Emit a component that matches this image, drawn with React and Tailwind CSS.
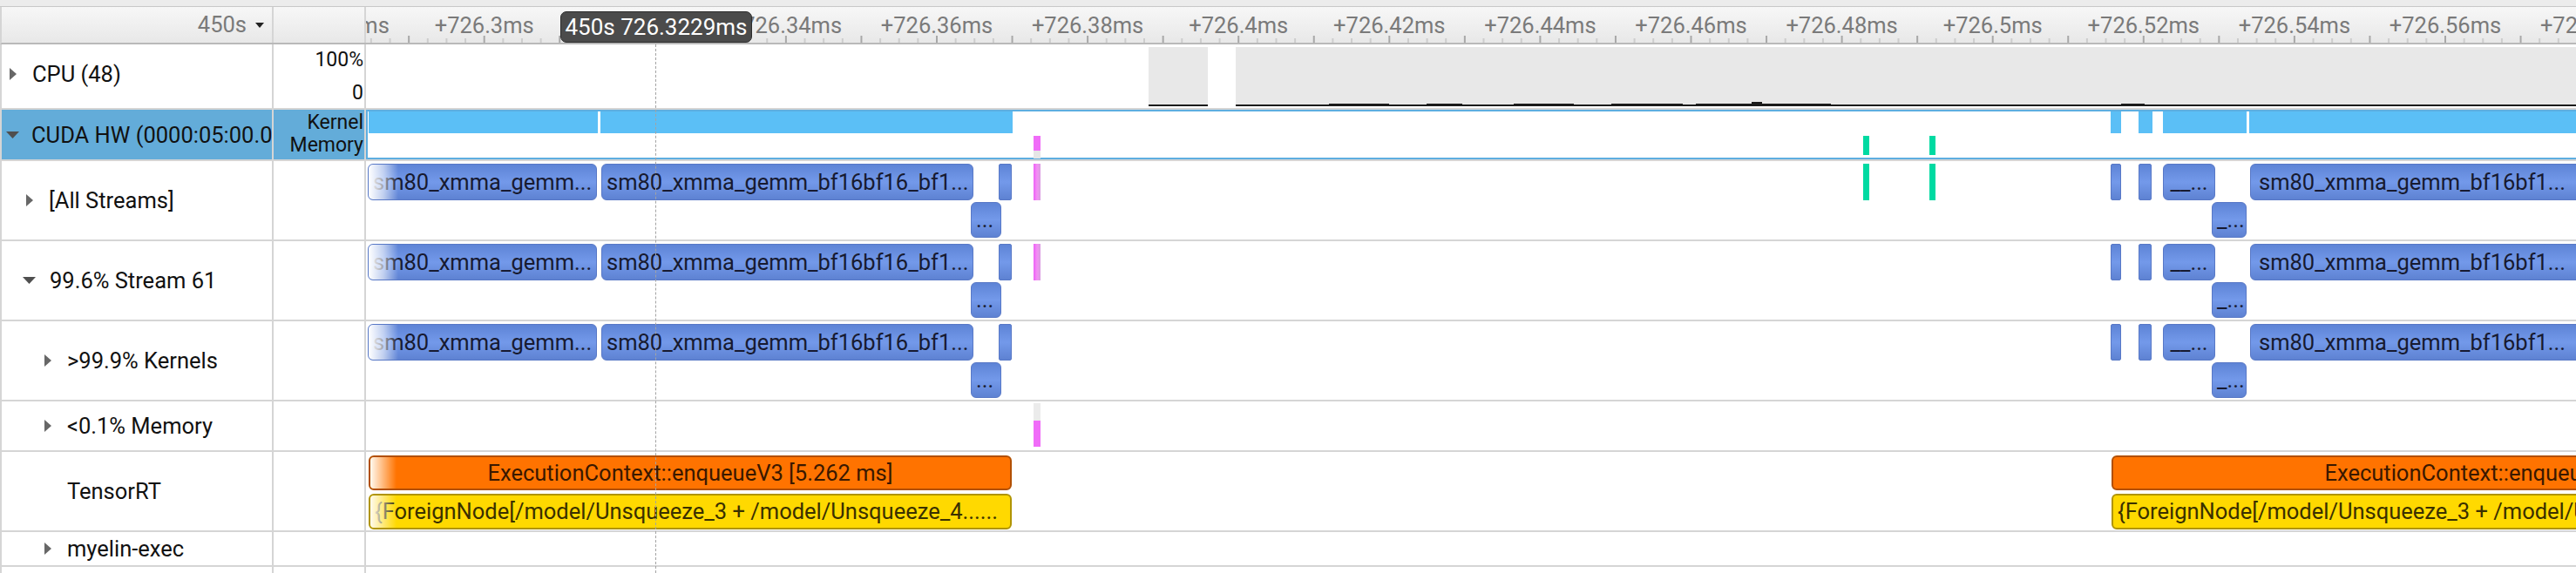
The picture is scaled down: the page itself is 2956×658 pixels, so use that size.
import clsx from "clsx";

// timeline canvas starts here (page x)
const TL = 420;
const pos = (x, w) => ({ left: x - TL, width: w });

const T0 = 555.7; // centre of +726.3ms
const STEP = 173.1; // px per 0.02ms

const ticks = [];
for (let i = -10; i < 130; i++) {
  const x = T0 + i * (STEP / 8);
  if (x < TL || x > 2960) continue;
  ticks.push({ x: x - TL, major: i % 4 === 0 });
}

// k = 1 (+726.32ms) sits under the cursor tooltip, so it is left out
const labels = [];
for (let k = -1; k <= 14; k++) {
  if (k === 1) continue;
  labels.push({
    x: T0 + STEP * k - TL,
    text: "+" + parseFloat((726.3 + 0.02 * k).toFixed(2)) + "ms",
  });
}

const kernelTop = [
  { x: 422, w: 263, t: "sm80_xmma_gemm...", fade: true },
  { x: 690, w: 427, t: "sm80_xmma_gemm_bf16bf16_bf1..." },
  { x: 1146, w: 15 },
  { x: 2422, w: 12 },
  { x: 2454, w: 15 },
  { x: 2482, w: 60, t: "__...", center: true },
  { x: 2582, w: 420, t: "sm80_xmma_gemm_bf16bf1...", wide: true },
];

const kernelLow = [
  { x: 1114, w: 35, t: "..." },
  { x: 2538, w: 40, t: "_..." },
];

const cpuBumps = [
  [1525, 69],
  [1637, 41],
  [1737, 69],
  [1849, 82],
  [1946, 155],
  [2434, 27],
];

function Tri({ dir }) {
  if (dir === "right") {
    return (
      <svg width="8" height="14" viewBox="0 0 8 14" className="shrink-0">
        <path d="M0 0 L8 7 L0 14 Z" fill="#676767" />
      </svg>
    );
  }
  return (
    <svg width="15" height="8" viewBox="0 0 15 8" className="shrink-0">
      <path d="M0 0 L15 0 L7.5 8 Z" fill="#4f4f4f" />
    </svg>
  );
}

function Label({ tri, text, className }) {
  return (
    <div className={clsx("flex h-full items-center whitespace-nowrap text-[25.5px] leading-[30px]", className)}>
      {tri && <Tri dir={tri} />}
      <span>{text}</span>
    </div>
  );
}

function Row({ className, sel, label, meta, children }) {
  return (
    <div className={clsx("flex border-b-2 border-l-2 border-[#d5d5d5]", className)}>
      <div className={clsx("w-[312px] shrink-0 overflow-hidden border-r-2 border-[#d5d5d5]", sel && "bg-[#63acd9]")}>
        {label}
      </div>
      <div className={clsx("w-[106px] shrink-0 border-r-2 border-[#d5d5d5]", sel && "bg-[#63acd9]")}>{meta}</div>
      <div className="relative flex-1 overflow-hidden">{children}</div>
    </div>
  );
}

function Kernel({ b, low }) {
  return (
    <div
      className={clsx(
        "absolute flex items-center overflow-hidden whitespace-nowrap border border-[#5878c6] bg-linear-to-b from-[#5e84d6] via-[#7399ea] to-[#5e82d2] text-[25.5px] text-[#171a30]",
        low ? "top-[47px] h-[41px]" : "top-[3px] h-[42px]",
        b.t ? "rounded-[6px]" : "rounded-[2px]",
        b.center ? "justify-center" : b.wide ? "pl-[9px]" : "pl-[5px]"
      )}
      style={pos(b.x, b.w)}
    >
      {b.t}
      {b.fade && <div className="absolute inset-y-0 left-0 w-[34px] bg-linear-to-r from-white via-white/60 to-transparent" />}
    </div>
  );
}

function KernelLane({ extra }) {
  return (
    <>
      {kernelTop.map((b) => (
        <Kernel key={b.x} b={b} />
      ))}
      {kernelLow.map((b) => (
        <Kernel key={b.x} b={b} low />
      ))}
      {extra}
    </>
  );
}

function Pink({ className }) {
  return (
    <div
      className={clsx("absolute bg-linear-to-r from-[#ec5ef6] via-[#f38ff4] to-[#d89ee0]", className)}
      style={pos(1186, 8)}
    />
  );
}

function Teal({ className }) {
  return (
    <>
      <div className={clsx("absolute bg-[#00daa2]", className)} style={pos(2138, 7)} />
      <div className={clsx("absolute bg-[#00daa2]", className)} style={pos(2214, 7)} />
    </>
  );
}

function Slice({ x, w, orange, text, fade }) {
  return (
    <div
      className={clsx(
        "absolute flex items-center overflow-hidden whitespace-nowrap rounded-[6px] border-2 text-[25.5px]",
        orange
          ? "top-[4px] h-[40px] justify-center border-[#b14f00] bg-[#ff7300] text-[#3a1800]"
          : "top-[48px] h-[41px] border-[#b09400] bg-[#ffd900] pl-[5px] text-[#3a3000]"
      )}
      style={pos(x, w)}
    >
      {text}
      {fade && <div className="absolute inset-y-0 left-0 w-[30px] bg-linear-to-r from-[#fffaf0] to-transparent" />}
    </div>
  );
}

export default function App() {
  return (
    <div className="relative h-[658px] w-[2956px] overflow-hidden bg-white font-['Roboto'] text-[#111]">
      <div className="h-[8px] border-b border-[#c8c8c8] bg-[#ececec]" />

      {/* header */}
      <div className="flex h-[43px] border-b-2 border-l-2 border-[#b9b9b9] border-l-[#d5d5d5] bg-linear-to-b from-[#f7f7f7] to-[#e8e8e8]">
        <div className="flex w-[312px] shrink-0 items-center justify-end gap-[10px] border-r-2 border-[#d5d5d5] pr-[9px] text-[25.5px] text-[#7a7a7a]">
          <span>450s</span>
          <svg width="10" height="6" viewBox="0 0 10 6">
            <path d="M0 0 L10 0 L5 6 Z" fill="#222" />
          </svg>
        </div>
        <div className="w-[106px] shrink-0 border-r-2 border-[#d5d5d5]" />
        <div className="relative flex-1 overflow-hidden">
          {labels.map((l) => (
            <span
              key={l.text}
              className="absolute top-[8px] -translate-x-1/2 whitespace-nowrap text-[25.5px] leading-[26px] text-[#7a7a7a]"
              style={{ left: l.x }}
            >
              {l.text}
            </span>
          ))}
          <svg className="absolute bottom-0 left-0" width="2536" height="8">
            {ticks.map((t) => (
              <rect
                key={t.x}
                x={t.x - 1}
                y={t.major ? 0 : 3}
                width="2"
                height={t.major ? 8 : 5}
                fill={t.major ? "#a8a8a8" : "#cdcdcd"}
              />
            ))}
          </svg>
        </div>
      </div>

      {/* CPU */}
      <Row
        className="h-[75px]"
        label={<Label tri="right" text="CPU (48)" className="gap-[18px] pb-[6px] pl-[9px]" />}
        meta={
          <div className="flex flex-col items-end pr-[1px] pt-[6px] text-[23px] leading-[24px]">
            <span>100%</span>
            <span className="mt-[14px]">0</span>
          </div>
        }
      >
        <div className="absolute top-[3px] h-[68px] border-b-2 border-[#1b1b1b] bg-[#e8e8e8]" style={pos(1318, 68)} />
        <div className="absolute top-[3px] h-[68px] border-b-2 border-[#1b1b1b] bg-[#e8e8e8]" style={pos(1418, 1540)} />
        {cpuBumps.map(([x, w]) => (
          <div key={x} className="absolute top-[68px] h-[3px] bg-[#1b1b1b]" style={pos(x, w)} />
        ))}
        <div className="absolute top-[66px] h-[5px] bg-[#1b1b1b]" style={pos(2010, 12)} />
      </Row>

      {/* CUDA HW */}
      <Row
        className="h-[59px]"
        sel
        label={<Label tri="down" text="CUDA HW (0000:05:00.0)" className="gap-[14px] pl-[5px]" />}
        meta={
          <div className="flex flex-col items-end pr-[1px] pt-[3px] text-[23px] leading-[24px]">
            <span>Kernel</span>
            <span className="mt-[2px]">Memory</span>
          </div>
        }
      >
        <div className="absolute inset-0 border-2 border-r-0 border-[#5eaee0]" />
        {[
          [423, 263],
          [689, 473],
          [2422, 12],
          [2454, 16],
          [2482, 96],
          [2581, 380],
        ].map(([x, w]) => (
          <div key={x} className="absolute top-[2px] h-[25px] bg-[#5bbff6]" style={pos(x, w)} />
        ))}
        <div className="absolute top-[30px] h-[17px] bg-[#f06cf8]" style={pos(1186, 8)} />
        <div className="absolute top-[47px] h-[9px] bg-[#e6e6e6]" style={pos(1186, 8)} />
        <Teal className="top-[30px] h-[22px]" />
      </Row>

      {/* [All Streams] */}
      <Row className="h-[92px]" label={<Label tri="right" text="[All Streams]" className="gap-[18px] pl-[28px]" />}>
        <KernelLane
          extra={
            <>
              <Pink className="top-[3px] h-[42px]" />
              <Teal className="top-[3px] h-[42px]" />
            </>
          }
        />
      </Row>

      {/* Stream 61 */}
      <Row className="h-[92px]" label={<Label tri="down" text="99.6% Stream 61" className="gap-[16px] pl-[24px]" />}>
        <KernelLane extra={<Pink className="top-[3px] h-[42px]" />} />
      </Row>

      {/* Kernels */}
      <Row className="h-[92px]" label={<Label tri="right" text=">99.9% Kernels" className="gap-[18px] pl-[49px]" />}>
        <KernelLane />
      </Row>

      {/* Memory */}
      <Row className="h-[58px]" label={<Label tri="right" text="<0.1% Memory" className="gap-[18px] pl-[49px]" />}>
        <div className="absolute top-[2px] h-[20px] bg-[#ebebeb]" style={pos(1186, 8)} />
        <div className="absolute top-[22px] h-[30px] bg-[#f06cf8]" style={pos(1186, 8)} />
      </Row>

      {/* TensorRT */}
      <Row className="h-[92px]" label={<Label text="TensorRT" className="pl-[75px]" />}>
        <Slice x={423} w={738} orange fade text="ExecutionContext::enqueueV3 [5.262 ms]" />
        <Slice x={423} w={738} fade text="{ForeignNode[/model/Unsqueeze_3 + /model/Unsqueeze_4......" />
        <Slice x={2423} w={954} orange text="ExecutionContext::enqueueV3 [5.262 ms]" />
        <Slice x={2423} w={954} text="{ForeignNode[/model/Unsqueeze_3 + /model/Unsqueeze_4......" />
      </Row>

      {/* myelin-exec */}
      <Row className="h-[40px]" label={<Label tri="right" text="myelin-exec" className="gap-[18px] pl-[49px]" />} />

      <Row className="h-[40px]" />

      {/* cursor line + time tooltip */}
      <div className="absolute bottom-0 left-[752px] top-[51px] z-20 border-l border-dashed border-[#a3a3a3]" />
      <div className="absolute left-[643px] top-[13px] z-30 flex h-[36px] w-[220px] items-center justify-center rounded-[7px] border border-[#2c2c2c] bg-[#4b4b4b] text-[26px] leading-none text-white">
        450s 726.3229ms
      </div>
    </div>
  );
}
